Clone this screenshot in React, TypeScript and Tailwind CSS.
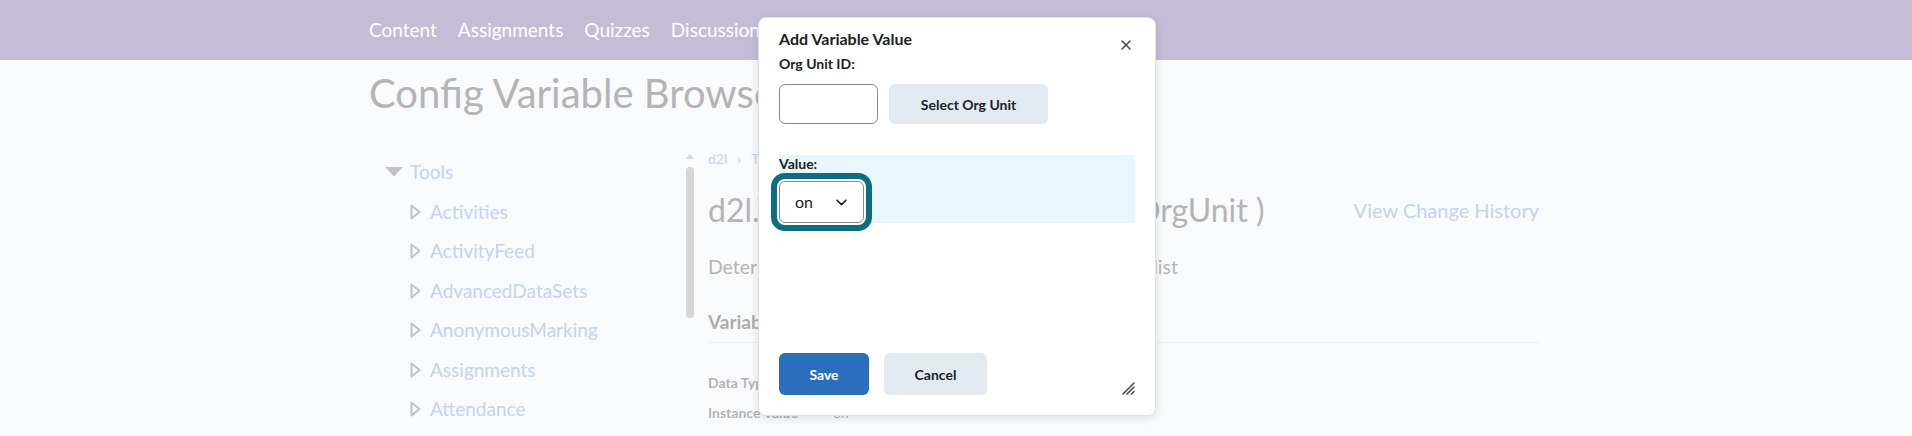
import { X } from 'lucide-react';

const tree = ['Activities', 'ActivityFeed', 'AdvancedDataSets', 'AnonymousMarking', 'Assignments', 'Attendance'];
const nav = ['Content', 'Assignments', 'Quizzes', 'Discussions', 'Grades', 'Classlist'];

function RightCaret() {
  return (
    <svg width="11" height="16" viewBox="0 0 11 16" className="shrink-0">
      <path d="M1.5 1.5 L9.5 8 L1.5 14.5 Z" fill="none" stroke="#c2c2c2" strokeWidth="2" strokeLinejoin="round" />
    </svg>
  );
}

function ResizeHandle() {
  return (
    <svg width="13" height="13" viewBox="0 0 13 13">
      <path d="M1 12 L12 1 M5 12 L12 5 M9.5 12 L12 9.5" stroke="#494c4e" strokeWidth="1.6" strokeLinecap="round" />
    </svg>
  );
}

function AddValueDialog() {
  return (
    <div className="absolute left-[758px] top-[17px] flex h-[399px] w-[398px] flex-col rounded-lg border border-[#e0e1e4] bg-white px-5 pb-5 shadow-[0_2px_10px_rgba(0,0,0,0.12)]">
      <div className="mt-[9px] flex h-6 items-start justify-between">
        <h2 className="text-[16px] font-bold leading-6 text-[#202122]">Add Variable Value</h2>
        <X className="mr-[1px] mt-[10px] h-4 w-4 text-[#494c4e]" strokeWidth={2.4} />
      </div>

      <label className="mt-[3px] text-[14px] font-bold leading-5 text-[#202122]">Org Unit ID:</label>
      <div className="mt-[10px] flex gap-[11px]">
        <input className="h-10 w-[99px] rounded-md border border-[#868a8f] bg-white outline-none" />
        <button className="h-10 w-[159px] rounded-md bg-[#e3e9f1] text-[14px] font-bold text-[#202122]">
          Select Org Unit
        </button>
      </div>

      <div className="mt-[31px] bg-[#e8f7fd]">
        <p className="text-[14px] font-bold leading-[18px] text-[#202122]">Value:</p>
        <div className="mt-2 flex h-[42px] w-[85px] items-center justify-between rounded-md border border-[#868a8f] bg-white pl-[15px] pr-[16px] shadow-[0_0_0_2px_#fff,0_0_0_8px_#0c6e7f]">
          <span className="text-[16px] text-[#202122]">on</span>
          <svg width="11" height="7" viewBox="0 0 11 7">
            <path d="M1 1.2 L5.5 5.6 L10 1.2" fill="none" stroke="#202122" strokeWidth="1.6" strokeLinecap="round" strokeLinejoin="round" />
          </svg>
        </div>
      </div>

      <div className="mt-auto flex gap-[15px]">
        <button className="h-[42px] w-[90px] rounded-md bg-[#2a6ebd] text-[14px] font-bold text-white">Save</button>
        <button className="h-[42px] w-[103px] rounded-md bg-[#e3e9f1] text-[14px] font-bold text-[#202122]">Cancel</button>
      </div>

      <div className="absolute bottom-5 right-5">
        <ResizeHandle />
      </div>
    </div>
  );
}

export default function App() {
  return (
    <div className="relative h-[436px] w-[1912px] overflow-hidden bg-[#f9fafc] font-['Lato','Liberation_Sans',sans-serif]">
      <header className="flex h-[60px] items-center gap-[21px] bg-[#c5bdd5] pl-[369px] text-[19px] text-white">
        {nav.map((item) => (
          <span key={item}>{item}</span>
        ))}
      </header>

      <h1 className="mt-[9px] pl-[369px] text-[40px] leading-[48px] text-[#b4b4b4]">Config Variable Browser</h1>

      <div className="flex pl-[385px]">
        <div className="w-[300px] pt-[35px]">
          <div className="flex h-10 items-center gap-[7px] text-[19px] text-[#c2d4ee]">
            <svg width="18" height="10" viewBox="0 0 18 10" className="shrink-0">
              <path d="M0 0 H18 L9 9.5 Z" fill="#c2c2c2" />
            </svg>
            Tools
          </div>
          {tree.map((item) => (
            <div key={item} className="flex h-[39.5px] items-center gap-[9px] pl-[25px] text-[19px] text-[#c2d4ee]">
              <RightCaret />
              {item}
            </div>
          ))}
        </div>

        <div className="flex w-[9px] flex-col items-center pt-[37px]">
          <svg width="8" height="5" viewBox="0 0 8 5">
            <path d="M0 5 L4 0 L8 5 Z" fill="#d3d3d3" />
          </svg>
          <div className="mt-[8px] h-[151px] w-[8px] rounded-full bg-[#d6d6d6]" />
        </div>

        <div className="ml-[14px] w-[831px]">
          <p className="flex gap-[10px] pt-[32px] text-[14px] leading-5 text-[#c2d4ee]">
            <span>d2l</span>
            <span>›</span>
            <span>Tools</span>
            <span>›</span>
            <span>Activities</span>
          </p>

          <div className="mt-[21px] flex items-center justify-between">
            <h2 className="text-[32px] leading-10 text-[#b4b4b4]">d2l.Tools.Activities.IsEnabled ( OrgUnit )</h2>
            <span className="text-[20px] text-[#c2d4ee]">View Change History</span>
          </div>

          <p className="mt-[25px] text-[19.4px] leading-6 text-[#b4b4b4]">
            Determines whether the tool is displayed in the tool list
          </p>

          <h3 className="mt-[31px] border-b border-[#eceef1] pb-2 text-[19px] font-bold leading-6 text-[#adadad]">
            Variable Information
          </h3>

          <div className="mt-[30px] grid grid-cols-[125px_1fr] gap-y-[10px] text-[14px] leading-5 text-[#b4b4b4]">
            <span className="font-bold">Data Type</span>
            <span>Boolean</span>
            <span className="font-bold">Instance Value</span>
            <span>on</span>
          </div>
        </div>
      </div>

      <AddValueDialog />
    </div>
  );
}
